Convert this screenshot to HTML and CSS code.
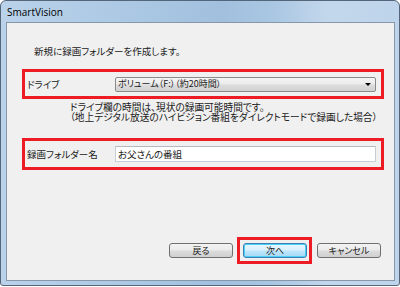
FILE: index.html
```html
<!DOCTYPE html>
<html lang="ja">
<head>
<meta charset="utf-8">
<title>SmartVision</title>
<link rel="stylesheet" href="styles.css">
</head>
<body>
<div class="window">
  <div class="titlebar"><span class="title">SmartVision</span></div>
  <div class="client">
    <p class="intro">新規に録画フォルダーを作成します。</p>
    <div class="field field-drive">
      <span class="label">ドライブ</span>
      <div class="select">
        <span class="select-text">ボリューム（F:）（約20時間）</span>
        <span class="arrow"></span>
      </div>
    </div>
    <div class="note">
      <div class="note-line">ドライブ欄の時間は、現状の録画可能時間です。</div>
      <div class="note-line">（地上デジタル放送のハイビジョン番組をダイレクトモードで録画した場合）</div>
    </div>
    <div class="field field-name">
      <span class="label">録画フォルダー名</span>
      <div class="input">お父さんの番組</div>
    </div>
    <div class="buttons">
      <button class="btn">戻る</button>
      <span class="focus-mark"><button class="btn primary">次へ</button></span>
      <button class="btn">キャンセル</button>
    </div>
  </div>
</div>
</body>
</html>
```

FILE: styles.css
```css
html, body {
  margin: 0;
  padding: 0;
  background: #ffffff;
  overflow: hidden;
}

body {
  font-family: "Noto Sans CJK JP", "Noto Sans", sans-serif;
  font-feature-settings: "palt";
  color: #1a1a1a;
}

.window {
  width: 400px;
  height: 286px;
  box-sizing: border-box;
  border: 1px solid #56667a;
  border-radius: 6px 6px 3px 3px;
  background: linear-gradient(90deg, #bad2ea 0%, #aac7e3 35%, #a2c0de 55%, #a9c6e2 68%, #c3d7ec 82%, #bed4ea 100%);
  display: flex;
  flex-direction: column;
  padding: 0 4px 4px 5px;
}

.titlebar {
  height: 21px;
  display: flex;
  align-items: center;
  flex-shrink: 0;
}

.title {
  font-family: "Open Sans", "Liberation Sans", sans-serif;
  font-feature-settings: normal;
  font-size: 10px;
  color: #000;
  padding-left: 1px;
  padding-top: 1px;
}

.client {
  flex: 1;
  background: #f0f0f0;
  border: 1px solid #8797aa;
  display: flex;
  flex-direction: column;
  min-height: 0;
}

.intro {
  margin: 22px 0 0 27px;
  font-size: 9.5px;
  line-height: 12px;
}

.field {
  margin-left: 15px;
  width: 362px;
  box-sizing: border-box;
  border: 3px solid #ed1c24;
  display: flex;
  align-items: center;
  padding: 0 5px 0 2px;
}

.field-drive {
  margin-top: 12px;
  height: 30px;
}

.field-name {
  margin-top: 16px;
  height: 32px;
}

.label {
  width: 88px;
  flex-shrink: 0;
  font-size: 9.5px;
  line-height: 12px;
}

.select {
  flex: 1;
  height: 15px;
  box-sizing: border-box;
  border: 1px solid #8a8a8a;
  border-radius: 2px;
  background: linear-gradient(180deg, #f4f4f4 0%, #ebebeb 48%, #dcdcdc 52%, #d2d2d2 100%);
  display: flex;
  align-items: center;
  padding: 0 4px 0 2px;
}

.select-text {
  flex: 1;
  font-size: 9px;
  line-height: 12px;
}

.arrow {
  width: 0;
  height: 0;
  border-left: 3px solid transparent;
  border-right: 3px solid transparent;
  border-top: 3px solid #000;
}

.note {
  margin: 3px 0 0 63px;
  font-size: 9.7px;
}

.note-line {
  height: 10px;
  line-height: 10px;
}

.input {
  flex: 1;
  height: 16px;
  box-sizing: border-box;
  border: 1px solid #c9cdd4;
  border-top-color: #b4b8c0;
  background: #ffffff;
  font-size: 9.5px;
  line-height: 14px;
  padding-left: 2px;
}

.buttons {
  margin-top: auto;
  display: flex;
  justify-content: flex-end;
  align-items: center;
  gap: 10px;
  padding: 0 13px 22px 0;
}

.btn {
  width: 64px;
  height: 15px;
  box-sizing: border-box;
  padding: 0;
  border: 1px solid #707070;
  border-radius: 3px;
  background: linear-gradient(180deg, #f3f3f3 0%, #ebebeb 48%, #dddddd 52%, #cfcfcf 100%);
  font-family: "Noto Sans CJK JP", sans-serif;
  font-feature-settings: "palt";
  font-size: 9px;
  line-height: 12px;
  color: #1a1a1a;
  display: block;
}

.focus-mark {
  display: block;
  border: 3px solid #ed1c24;
  padding: 3px 2px 3px 3px;
  margin: -6px -5px -6px -6px;
}

.btn.primary {
  border-color: #3c7fb1;
  background: linear-gradient(180deg, #eaf6fd 0%, #d9f0fc 48%, #bee6fd 52%, #a7d9f5 100%);
  box-shadow: inset 0 0 0 1px #48d0f8;
}
```
